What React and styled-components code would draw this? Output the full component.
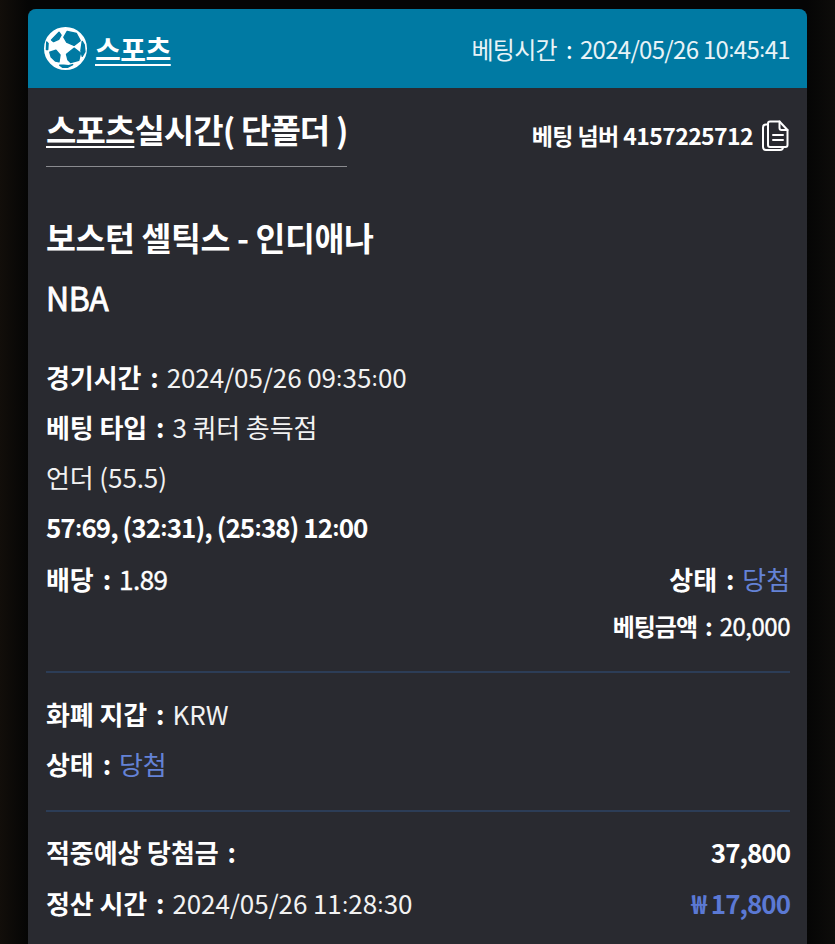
import React from 'react';
import styled, { createGlobalStyle } from 'styled-components';

const GlobalStyle = createGlobalStyle`
  html, body {
    margin: 0;
    padding: 0;
    height: 100%;
    background: #060606;
    overflow: hidden;
  }
  body {
    font-family: "Noto Sans CJK KR", "Noto Sans", sans-serif;
    color: #fff;
  }
`;

const Page = styled.div`
  height: 944px;
  padding: 9px 28px 0;
  box-sizing: border-box;
  overflow: hidden;
  background: linear-gradient(90deg, #120e0a 0, #050505 28px, #050505 807px, #0d0c0a 835px);
`;

const Card = styled.div`
  background: #292a30;
  border-radius: 8px 8px 0 0;
  height: 950px;
`;

const Header = styled.header`
  height: 79px;
  background: #007aa3;
  border-radius: 8px 8px 0 0;
  box-sizing: border-box;
  padding: 0 17px 0 16px;
  display: flex;
  align-items: center;
  justify-content: space-between;
`;

const Brand = styled.div`
  display: flex;
  align-items: center;
  gap: 8px;
`;

const BrandName = styled.span`
  font-size: 28px;
  line-height: 36px;
  font-weight: 700;
  letter-spacing: -0.5px;
  text-decoration: underline;
  text-decoration-thickness: 2px;
  text-underline-offset: 3px;
`;

const HeaderTime = styled.span`
  font-size: 24px;
  letter-spacing: -0.7px;
  color: #e8f3f7;
`;

const Body = styled.main`
  padding: 24px 17px 0 18px;
`;

const TitleRow = styled.div`
  display: flex;
  justify-content: space-between;
`;

const TitleBox = styled.div`
  width: 301px;
  height: 54px;
  border-bottom: 1px solid #8a8b8f;
`;

const Title = styled.h1`
  margin: 0;
  font-size: 33px;
  line-height: 34px;
  font-weight: 700;
  letter-spacing: -0.9px;
  white-space: nowrap;
`;

const TitleUnder = styled.span`
  text-decoration: underline;
  text-underline-offset: 3px;
  text-decoration-thickness: 2px;
`;

const BetNumber = styled.div`
  display: flex;
  align-items: center;
  gap: 8px;
  height: 46px;
  font-size: 23px;
  font-weight: 700;
  letter-spacing: -0.6px;
`;

const Match = styled.h2`
  margin: 43px 0 0;
  font-size: 32.500px;
  line-height: 54px;
  font-weight: 700;
  letter-spacing: -0.4px;
`;

const League = styled.div`
  margin-top: 11px;
  font-size: 32px;
  line-height: 44px;
  letter-spacing: -0.5px;
  -webkit-text-stroke: 0.8px #fff;
`;

const Rows = styled.div`
  margin-top: 32px;
`;

const Row = styled.div`
  display: flex;
  justify-content: space-between;
  align-items: center;
  height: ${props => props.h || 50}px;
  font-size: ${props => props.size || 26}px;
  letter-spacing: -0.1px;
  color: #f2f2f2;
`;

const Label = styled.b`
  font-weight: 700;
  color: #fff;
  letter-spacing: ${props => props.tight ? "-1px" : "inherit"};
`;

const Colon = styled.span`
  display: inline-block;
  margin: ${props => props.tight ? "0 7px 0 8px" : "0 8px 0 9px"};
  font-weight: ${props => props.light ? 400 : 700};
  color: #fff;
`;

const TimeColon = styled.span`
  font-size: 0.8em;
  vertical-align: 2px;
  margin: 0 0.5px;
`;

const Strong = styled.span`
  font-weight: 700;
  letter-spacing: -1px;
  color: ${props => props.blue ? "#5b79d4" : "#fff"};
`;

const Medium = styled.span`
  color: #fff;
  letter-spacing: -0.500px;
  -webkit-text-stroke: 0.4px #fff;
`;

const Blue = styled.span`
  color: #6482d6;
`;

const Divider = styled.div`
  height: 2px;
  background: #2c3d57;
  margin: ${props => props.m};
`;

// digits keep their normal size, only the colons between them are small and raised
const Time = ({ value }) => (
  <>
    {value.split(":").map((part, i) => (
      <React.Fragment key={i}>
        {i > 0 && <TimeColon>:</TimeColon>}
        {part}
      </React.Fragment>
    ))}
  </>
);

const BallIcon = () => (
  <svg width="43" height="43" viewBox="0 0 126 126">
    <circle cx="63" cy="63" r="60" fill="#fff" stroke="#fff" strokeWidth="6" />
    <g fill="#007aa3" stroke="#007aa3" strokeWidth="4" strokeLinejoin="round">
      <path d="M22 38L44 15 50 24 43 36 28 43z" />
      <path d="M58 30L68 13 95 19 106 40 88 54 66 44z" />
      <path d="M112 42L118 52 120 72 112 86 108 70z" />
      <path d="M17 74L35 68 47 82 44 102 34 100 21 88z" />
      <path d="M66 80L88 62 107 76 102 98 78 104 70 96z" />
      <path d="M46 112L58 112 72 113 84 110 70 118 54 118z" />
      <path d="M8 44L12 48 11 66 7 66z" />
    </g>
  </svg>
);

const CopyIcon = () => (
  <svg width="29" height="33" viewBox="0 0 29 33" fill="none" stroke="#fff" strokeWidth="2" strokeLinejoin="round" strokeLinecap="round">
    <path d="M7 26V4.500a2 2 0 0 1 2-2h9.500l8 8.500v15a2 2 0 0 1-2 2H9a2 2 0 0 1-2-2z" />
    <path d="M18.500 2.500V9a2 2 0 0 0 2 2h6" />
    <path d="M7 5.500H5a3 3 0 0 0-3 3V28a3 3 0 0 0 3 3h14a3 3 0 0 0 3-3" />
    <path d="M12 16h10M12 21h10" />
  </svg>
);

const App = () => (
  <Page>
    <GlobalStyle />
    <Card>
      <Header>
        <Brand>
          <BallIcon />
          <BrandName>스포츠</BrandName>
        </Brand>
        <HeaderTime>베팅시간<Colon light>:</Colon><Time value="2024/05/26 10:45:41" /></HeaderTime>
      </Header>
      <Body>
        <TitleRow>
          <TitleBox>
            <Title><TitleUnder>스포츠</TitleUnder>실시간( 단폴더 )</Title>
          </TitleBox>
          <BetNumber>베팅 넘버 4157225712 <CopyIcon /></BetNumber>
        </TitleRow>
        <Match>보스턴 셀틱스 - 인디애나</Match>
        <League>NBA</League>
        <Rows>
          <Row><span><Label>경기시간</Label><Colon>:</Colon><Time value="2024/05/26 09:35:00" /></span></Row>
          <Row><span><Label>베팅 타입</Label><Colon>:</Colon>3 쿼터 총득점</span></Row>
          <Row h={51}><span>언더 (55.5)</span></Row>
          <Row h={49}><Strong><Time value="57:69, (32:31), (25:38) 12:00" /></Strong></Row>
          <Row h={54}>
            <span><Label>배당</Label><Colon>:</Colon><Medium>1.89</Medium></span>
            <span><Label>상태</Label><Colon>:</Colon><Blue>당첨</Blue></span>
          </Row>
          <Row h={40} size={24}>
            <span />
            <span><Label tight>베팅금액</Label><Colon tight>:</Colon><Medium>20,000</Medium></span>
          </Row>
        </Rows>
        <Divider m="26px 0 15px" />
        <Row><span><Label>화폐 지갑</Label><Colon>:</Colon>KRW</span></Row>
        <Row><span><Label>상태</Label><Colon>:</Colon><Blue>당첨</Blue></span></Row>
        <Divider m="22px 0 14px" />
        <Row>
          <span><Label>적중예상 당첨금</Label><Colon>:</Colon></span>
          <Strong>37,800</Strong>
        </Row>
        <Row h={53}>
          <span><Label>정산 시간</Label><Colon>:</Colon><Time value="2024/05/26 11:28:30" /></span>
          <Strong blue>₩ 17,800</Strong>
        </Row>
      </Body>
    </Card>
  </Page>
);

export default App;
